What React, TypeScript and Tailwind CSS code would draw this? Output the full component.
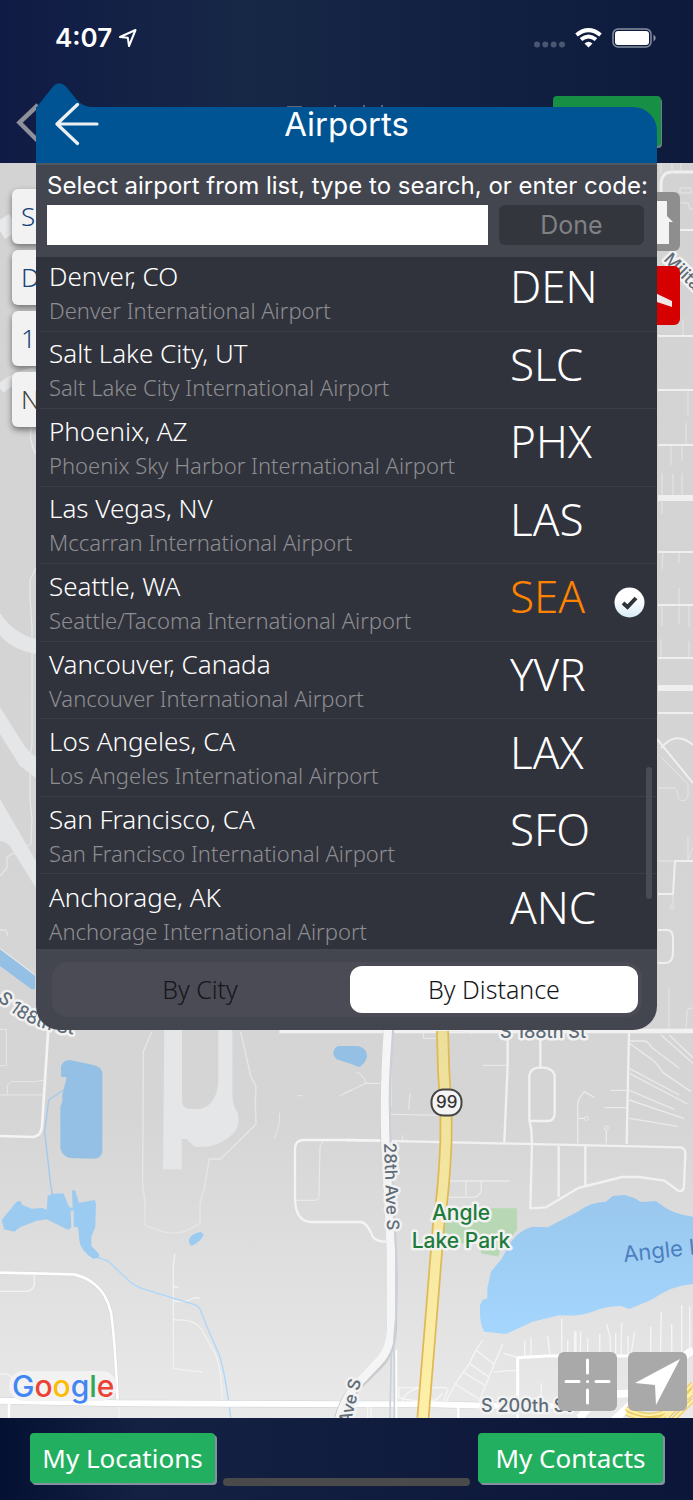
import { useState } from 'react';

type Airport = { city: string; name: string; code: string };

const AIRPORTS: Airport[] = [
  { city: 'Denver, CO', name: 'Denver International Airport', code: 'DEN' },
  { city: 'Salt Lake City, UT', name: 'Salt Lake City International Airport', code: 'SLC' },
  { city: 'Phoenix, AZ', name: 'Phoenix Sky Harbor International Airport', code: 'PHX' },
  { city: 'Las Vegas, NV', name: 'Mccarran International Airport', code: 'LAS' },
  { city: 'Seattle, WA', name: 'Seattle/Tacoma International Airport', code: 'SEA' },
  { city: 'Vancouver, Canada', name: 'Vancouver International Airport', code: 'YVR' },
  { city: 'Los Angeles, CA', name: 'Los Angeles International Airport', code: 'LAX' },
  { city: 'San Francisco, CA', name: 'San Francisco International Airport', code: 'SFO' },
  { city: 'Anchorage, AK', name: 'Anchorage International Airport', code: 'ANC' },
];

function StreetMap() {
  return (
    <svg
      className="absolute inset-0 h-full w-full"
      viewBox="0 163 693 1255"
      preserveAspectRatio="xMidYMid slice"
      aria-label="Map"
      fill="none"
      strokeLinejoin="round"
    >
      <defs>
        <linearGradient id="land" x1="0" y1="163" x2="0" y2="1418" gradientUnits="userSpaceOnUse">
          <stop offset="0" stopColor="#d3d3d3" />
          <stop offset="0.76" stopColor="#d5d5d5" />
          <stop offset="1" stopColor="#e9e9e9" />
        </linearGradient>
        <linearGradient id="lake" x1="0" y1="0" x2="0" y2="1">
          <stop offset="0" stopColor="#99c7ed" />
          <stop offset="1" stopColor="#a5d6fd" />
        </linearGradient>
        <linearGradient id="highway" x1="0" y1="1030" x2="0" y2="1418" gradientUnits="userSpaceOnUse">
          <stop offset="0" stopColor="#ecdf9b" />
          <stop offset="1" stopColor="#fff0a8" />
        </linearGradient>
        <path id="curved-street" d="M-3 999Q28 1032 80 1035" />
      </defs>
      <rect y="163" width="693" height="1255" fill="url(#land)" />

      {/* West side, above the lake */}
      <path d="M0 231L14 222" stroke="#e8e9ea" strokeWidth="19" />
      <path d="M0 389Q14 376 36 372" stroke="#e6e7e8" strokeWidth="10" />
      <path d="M31 425Q29 445 36 454M31 440L35 453M36 568L30 580V597L32 628V745L30 755V800L32 819L31 844L7 857V868L0 876M0 930H6L8 936" stroke="#e5e6e7" strokeWidth="1.3" />
      <path d="M0 613Q14 634 36 639V654Q10 649 0 635ZM0 707L22 742Q28 752 36 757V778L20 766L0 734ZM0 799L36 861V888L13 851Q8 841 0 841Z" fill="#e5e6e8" />

      {/* East side, beside the runway */}
      <g stroke="#efefef">
        <path d="M661 193V185Q661 172 672 172H693" strokeWidth="3" />
        <path d="M658 230H693M658 336H693M658 390H693M658 445H693M658 552H693M658 605H693M658 713H693" strokeWidth="2" />
        <path d="M658 498H693M658 688H693" strokeWidth="6" />
        <path d="M658 658H693" strokeWidth="2" />
        <path d="M657 739L693 783M661 748Q676 730 693 745M693 861H675L673 894H658M658 930H668Q673 931 673 938V952Q673 963 665 963H658" strokeWidth="2" />
      </g>
      <g stroke="#e6e6e6" strokeWidth="1">
        <path d="M661 163V174M672 163V173M681 163V171M680 188H691V193H680ZM681 203H688L690 209H693M683 319V335M688 391V416M686 423V444M671 446V465M682 446V461M662 473V495M673 474V495M682 473V495M662 500V514M663 553L662 569M679 553V563M679 588V604M689 606V627M662 606V626M679 606V624M661 639V657M689 641V657M658 788H674Q678 789 678 798Q683 804 688 797V784L661 757M658 861H675M688 837V860L693 847M673 894V904" />
        <circle cx="672" cy="907" r="2" />
        <path d="M669 987V1031M686 1030L687 1010Q688 1008 693 1008" />
      </g>

      {/* Airfield and the streets west of 28th Ave S */}
      <g transform="translate(0 940) scale(.33333)">
        <path d="M0 28L105 107V148H95L0 78Z" fill="#93c0e4" />
        <path d="M0 25L105 105" stroke="#ececec" strokeWidth="3" />
        <path d="M493 260H546V485Q548 507 575 507H600Q650 495 655 425V260H697V470Q700 500 714 520Q720 555 704 577Q660 620 614 620H584L560 597H545V688H489Z" fill="#e5e6e7" />
        <path d="M455 275L430 335L428 730L435 790V850Q435 860 460 865Q520 890 560 872L600 850V790L613 745L628 657H662L768 553L766 490L768 440L752 408L722 275" stroke="#e5e6e7" strokeWidth="4" />
        <path d="M839 518Q840 560 823 595M893 466L910 468M1018 468L1060 448" stroke="#e7e7e7" strokeWidth="3" />
        <path d="M0 268H19V377H0M22 465V436L34 425H108L132 420M0 465H130" stroke="#e7e7e7" strokeWidth="3" />
        <path d="M145 265L126 560Q123 588 100 591L0 588" stroke="#f4f4f4" strokeWidth="8" />
        <path d="M190 450L146 480L134 575L152 735L158 765" stroke="#9fcaef" strokeWidth="4" />
        <path d="M183 410V378Q190 360 210 360L280 375Q305 380 307 400V635Q302 655 282 656L210 654Q186 648 181 625V500L187 485V465L200 412Z" fill="#93c0e4" />
        <path d="M1015 318H1075Q1101 325 1101 350Q1095 374 1075 381L1055 372L1041 368L1010 358Q1000 350 1000 340Q1000 325 1015 318Z" fill="#93c0e4" />
      </g>
      <g transform="translate(0 1200) scale(.33333)">
        <path d="M5 60L50 5L62 3L66 14L95 26L128 24L140 30L143 -12L155 -18L190 -20L208 22L218 24L216 -28L225 -30L237 8L285 0L288 15L286 80L274 110V138L297 162V173L280 176Q240 152 238 120L234 82L221 80V30L212 34L214 82L205 90L140 58L110 62L60 82L43 95L12 88Z" fill="#9ccbf1" />
        <path d="M567 120Q572 100 603 96L611 105Q602 126 575 137Q567 135 567 120Z" fill="#9ccbf1" />
        <path d="M524 162L520 200V505L566 512L608 516M520 261H535M520 303L555 305L580 294H599M522 359L560 361Q590 366 606 390L645 460Q665 505 666 598" stroke="#f1f1f1" strokeWidth="4" />
        <path d="M295 173L324 183L390 245Q405 257 425 265L590 316L600 327L625 390L658 465Q676 520 692 653" stroke="#acd7fb" strokeWidth="4" />
        <path d="M0 274H80Q98 272 103 255V222M0 522H20L38 532M357 610V654" stroke="#f2f2f2" strokeWidth="4" />
        <path d="M0 218L222 223Q260 232 283 252Q320 280 333 338Q345 420 353 605" stroke="#d3d6da" strokeWidth="11" />
        <path d="M0 218L222 223Q260 232 283 252Q320 280 333 338Q345 420 353 605" stroke="#fff" strokeWidth="8" />
        <path d="M0 602L360 610L700 611L1041 613H1300L1460 617L1770 617" stroke="#d3d6da" strokeWidth="22" />
        <path d="M0 602L360 610L700 611L1041 613H1300L1460 617L1770 617" stroke="#fff" strokeWidth="18" />
        <path d="M27 610V654" stroke="#fff" strokeWidth="7" />
      </g>

      {/* Highway 99 corridor and eastward */}
      <g transform="translate(346 940) scale(.33333)">
        <path d="M-200 273H1041" stroke="#f1f1f1" strokeWidth="14" />
        <path d="M135 275V500M134 523L282 526M232 278V295H272M305 275H350L380 280M410 376H482M192 460L188 510M170 586V600M32 397Q50 400 60 430H106M-5 460L60 430" stroke="#ebebeb" strokeWidth="3" />
        <path d="M0 600L500 611L1003 622Q1018 625 1018 640L1014 742Q1010 756 998 753L955 722L880 711H828L697 744L600 802L553 805L558 612L556 570L550 540V405Q555 383 583 382Q620 382 626 405V520Q625 543 605 543H553M583 380V275M485 275V375L475 606M849 275L842 612M638 615V770M718 617V738" stroke="#f1f1f1" strokeWidth="7" />
        <path d="M120 602L0 600H-125Q-153 600 -153 625V780Q-150 846 -103 846H45Q65 850 80 890Q90 905 120 905" stroke="#f4f4f4" strokeWidth="7" />
        <path d="M-68 603L-78 618L-81 770Q-82 781 -93 781H-150" stroke="#ececec" strokeWidth="3" />
        <path d="M695 610V490Q695 480 715 455L746 473M695 535H715M781 610V570M775 503H840M794 451H850L985 508M850 480L1015 536M850 535L995 559M850 385L1000 465M850 400L1025 492M850 310L910 353Q930 365 950 397L1035 455M850 303H895Q905 304 920 325L1000 385M945 285L1041 370M970 285L1041 353M306 723H490M360 723V771M406 725V750Q402 768 385 772H303" stroke="#eaeaea" strokeWidth="4" />
        <circle cx="721" cy="535" r="6" stroke="#eaeaea" strokeWidth="3" />
        <circle cx="781" cy="564" r="6" stroke="#eaeaea" strokeWidth="3" />
        <path d="M129 265Q115 450 119 600L138 940V1140Q140 1230 100 1270L60 1310Q0 1360 -20 1435" stroke="#c8cbd0" strokeWidth="31" />
        <path d="M126 265Q113 450 118 600L135 940V1140Q138 1225 98 1265L55 1310Q0 1360 -20 1435" stroke="#f5f5f5" strokeWidth="25" />
        <path d="M143 275Q123 450 135 600L148 900M145 860Q158 1000 150 1130Q140 1220 145 1260V1435M136 1230L132 1435" stroke="#cbd1d8" strokeWidth="5" />
        <path d="M151 1230V1435" stroke="#fff" strokeWidth="5" />
      </g>
      <g transform="translate(346 1200) scale(.33333)">
        <path d="M290 25H513V90L497 110L470 125L457 170L405 160V130H290Z" fill="#b8d8b5" />
        <path d="M435 215L468 175L495 125Q520 90 560 80L605 82L695 35Q735 5 780 5L800 -12L835 -15L865 -6L885 6L930 3L960 25Q990 43 1041 50V252Q980 255 915 300L850 327L825 318Q770 320 740 335Q700 350 640 346L560 365L480 402L415 395Q400 375 402 315L410 299L424 295V265Z" fill="url(#lake)" />
        <path d="M1041 450L990 485L805 660M700 655L760 585L850 580" stroke="#fff" strokeWidth="23" />
        <path d="M515 615V473L600 468H1000" stroke="#fff" strokeWidth="9" />
        <path d="M647 355V468M536 422V468M555 412V468M605 408L612 465M665 420V463M686 393V463M690 395V463M704 393L703 463M725 415V463M761 402V463M782 373L792 410L794 463M809 400V463M827 368L825 463M846 408V463M866 398L855 463M914 380V463M946 335L943 463M977 372V463M1007 315V463M1031 318V463M410 420L390 450L370 490L328 552L300 605M470 433L398 605M390 450L443 492M370 490L427 530M350 515L415 555M328 552L395 595M475 460L512 472M443 517L485 512H512M586 550V600M158 563H300L306 570L292 603M158 563V592Q190 605 270 600L290 580M170 605Q175 575 215 565M65 620V655M75 620V655" stroke="#f5f5f5" strokeWidth="4" />
        <path d="M337 620V655M515 620V655" stroke="#fff" strokeWidth="7" />
        <path d="M840 625Q900 660 960 635L1041 550M840 640Q900 665 945 655L1041 580M960 655L1041 570M980 660L1041 600" stroke="#eccb60" strokeWidth="14" />
        <path d="M840 625Q900 660 960 635L1041 550M840 640Q900 665 945 655L1041 580M960 655L1041 570M980 660L1041 600" stroke="#fff0a8" strokeWidth="7" />
      </g>
      <path d="M442.500 1031Q443 1070 446 1110V1140Q444 1190 439 1220L423 1418" stroke="#dfb956" strokeWidth="13" />
      <path d="M442.500 1031Q443 1070 446 1110V1140Q444 1190 439 1220L423 1418" stroke="url(#highway)" strokeWidth="9.500" />
      <rect x="431.500" y="1089.500" width="30" height="26" rx="12" fill="#f4f4f4" stroke="#444" strokeWidth="2" />

      <g className="font-['Inter',sans-serif]" stroke="#f2f2f2" strokeWidth="5" paintOrder="stroke" fill="#5f6c77" fontWeight="500">
        <text x="436" y="1108" fontSize="17" fill="#333" stroke="none">99</text>
        <text x="500" y="1038" fontSize="18">S 188th St</text>
        <text x="481" y="1412" fontSize="18">S 200th St</text>
        <text fontSize="18">
          <textPath href="#curved-street">S 188th St</textPath>
        </text>
        <text transform="translate(384 1143) rotate(88)" fontSize="17">28th Ave S</text>
        <text transform="translate(350 1425) rotate(-76)" fontSize="17">Ave S</text>
        <text transform="translate(663 260) rotate(45)" fontSize="17">Military</text>
        <text x="461" y="1220" fontSize="21" fill="#207b3b" textAnchor="middle">Angle</text>
        <text x="461" y="1248" fontSize="21" fill="#207b3b" textAnchor="middle">Lake Park</text>
        <text transform="translate(624 1262) rotate(-6)" fontSize="22" fill="#4c7fbf" stroke="none" fontWeight="400">Angle Lake</text>
      </g>
      <path d="M24 1386H102" stroke="#f2f2f2" strokeWidth="30" strokeLinecap="round" />
      <text x="12" y="1397" fontSize="30" fontWeight="500" className="font-['Inter',sans-serif]">
        <tspan fill="#4285f4">G</tspan>
        <tspan fill="#ea4335">o</tspan>
        <tspan fill="#fbbc05">o</tspan>
        <tspan fill="#4285f4">g</tspan>
        <tspan fill="#34a853">l</tspan>
        <tspan fill="#ea4335">e</tspan>
      </text>
    </svg>
  );
}

function StatusBar() {
  return (
    <div className="flex h-[76px] items-center justify-between pr-9 pl-[55px] text-white">
      <div className="flex items-center gap-[7px]">
        <span className="text-[26px] leading-8 font-semibold">4:07</span>
        <svg width="18" height="20" viewBox="0 0 18 20" fill="none" stroke="white" strokeWidth="2" strokeLinejoin="round" aria-hidden="true">
          <path d="M1 9L16.500 2L10 18L8.800 9.800Z" />
        </svg>
      </div>
      <div className="flex items-center gap-[10px]">
        <svg width="31" height="20" viewBox="0 0 31 20" fill="#4b5672" aria-hidden="true">
          <circle cx="3" cy="16.500" r="3" />
          <circle cx="11.300" cy="16.500" r="3" />
          <circle cx="19.700" cy="16.500" r="3" />
          <circle cx="28" cy="16.500" r="3" />
        </svg>
        <svg width="27" height="20" viewBox="0 0 27 20" fill="none" stroke="white" strokeWidth="4" aria-hidden="true">
          <path d="M1.500 7Q13.500 -2.800 25.500 7" />
          <path d="M6 11.500Q13.500 5.500 21 11.500" />
          <path d="M13.500 19.600L9.500 15.500Q13.500 12 17.500 15.500Z" fill="white" stroke="none" />
        </svg>
        <svg width="45" height="20" viewBox="0 0 45 20" aria-hidden="true">
          <rect x="1" y="1" width="38" height="18" rx="5" fill="none" stroke="#8991a3" strokeWidth="1.500" />
          <rect x="3" y="3" width="34" height="14" rx="3" fill="white" />
          <path d="M41.500 6.500Q46 10 41.500 13.500Z" fill="#8991a3" />
        </svg>
      </div>
    </div>
  );
}

function CheckMark() {
  return (
    <svg width="31" height="31" viewBox="0 0 31 31" aria-label="Selected">
      <defs>
        <linearGradient id="disc" x1="0" y1="0" x2="0" y2="1">
          <stop offset="0.400" stopColor="#fff" />
          <stop offset="1" stopColor="#d7ecf5" />
        </linearGradient>
      </defs>
      <circle cx="15.500" cy="15.500" r="15" fill="url(#disc)" />
      <path d="M9 16L13.500 20L22 11" fill="none" stroke="#31333c" strokeWidth="4" />
    </svg>
  );
}

function AirportPicker() {
  const [selected, setSelected] = useState('SEA');
  const [order, setOrder] = useState('By Distance');

  return (
    <section aria-label="Airports" className="absolute inset-x-9 top-[107px] text-white">
      <svg className="absolute -top-6 left-0" width="60" height="25" viewBox="0 0 60 25" aria-hidden="true">
        <path d="M0 25L17 3.500Q23 -3 30 3.500L41 17Q47 24 56 24V25Z" fill="#005493" />
      </svg>
      <header className="relative grid h-14 grid-cols-[1fr_auto_1fr] items-start rounded-tr-3xl bg-[#005493]">
        <button type="button" aria-label="Back" className="-mt-1 ml-[18px] w-12">
          <svg width="48" height="44" viewBox="0 0 48 44" fill="none" stroke="#ecf0f3" strokeWidth="3.200" strokeLinecap="round" strokeLinejoin="round">
            <path d="M23.500 1.500L3 21L23.500 40.500M3 21H43" />
          </svg>
        </button>
        <h1 className="text-[33px] leading-[34px]">Airports</h1>
      </header>
      <div className="overflow-hidden rounded-b-[24px] border-t-2 border-[#4d5862] bg-[#43464f]">
        <form className="pt-[3px] pr-[13px] pb-3 pl-[11px]" onSubmit={(e) => e.preventDefault()}>
          <label htmlFor="airport-search" className="block h-[37px] text-[24px] leading-9 whitespace-nowrap">
            Select airport from list, type to search, or enter code:
          </label>
          <div className="flex gap-[11px]">
            <input id="airport-search" type="text" className="h-10 min-w-0 flex-1 bg-white px-2 text-2xl text-black outline-none" />
            <button type="submit" className="h-10 w-[145px] rounded-md bg-[#34363e] text-[25px] leading-10 text-[#808184]">
              Done
            </button>
          </div>
        </form>
        <div className="relative h-[692px] overflow-hidden bg-[#31333c] font-['Noto_Sans',sans-serif]">
          <ul className="-mt-[3px] grid h-[698px] auto-rows-fr">
            {AIRPORTS.map((airport) => (
              <li key={airport.code} className="ml-1 border-b border-[#3c3f49] last:border-0">
                <button
                  type="button"
                  onClick={() => setSelected(airport.code)}
                  className="flex h-full w-full items-center pl-[9px] text-left font-light"
                >
                  <span className="min-w-0 flex-1 pt-px">
                    <span className="block text-[26px] leading-[34px]">{airport.city}</span>
                    <span className="block text-[22px] leading-[34px] text-[#8d8e92]">{airport.name}</span>
                  </span>
                  <span className={`w-[104px] pb-3 text-[44px] leading-[60px] ${airport.code === selected ? 'text-[#ff8200]' : ''}`}>
                    {airport.code}
                  </span>
                  <span className="w-[43px]">{airport.code === selected && <CheckMark />}</span>
                </button>
              </li>
            ))}
          </ul>
          <div className="absolute right-[5px] bottom-[50px] h-[132px] w-[6px] rounded-full bg-[#4a4b55]" />
        </div>
        <div className="pt-[13px] pr-[15px] pb-[13px] pl-4">
          <div className="grid h-[55px] grid-cols-2 gap-[6px] rounded-2xl bg-[#4b4b55] p-1 font-['Noto_Sans',sans-serif] text-[25px] font-light text-[#15161a]">
            {['By City', 'By Distance'].map((label) => (
              <button
                key={label}
                type="button"
                aria-pressed={order === label}
                onClick={() => setOrder(label)}
                className={`rounded-xl ${order === label ? 'bg-white' : ''}`}
              >
                {label}
              </button>
            ))}
          </div>
        </div>
      </div>
    </section>
  );
}

export default function App() {
  return (
    <div className="relative flex min-h-screen flex-col overflow-hidden bg-[#142143] font-['Inter',sans-serif]">
      <header className="h-[163px] bg-linear-to-r from-[#101b45] via-[#172746] via-35% to-[#0d1a3c]">
        <StatusBar />
        <div className="flex items-start justify-between pt-5 pr-8 pl-4">
          <button type="button" aria-label="Previous page" className="pt-1">
            <svg width="24" height="46" viewBox="0 0 24 46" fill="none" stroke="#8e909a" strokeWidth="4.500">
              <path d="M22 5L3.500 22.500L22 41" />
            </svg>
          </button>
          <svg className="mt-[9px] ml-20" width="100" height="4" viewBox="0 0 100 4" fill="#5d6677" aria-hidden="true">
            <path d="M0 1H15V2H0ZM47 0H49V2H47ZM76 0H78V2H76ZM94 0H96V2H94Z" />
          </svg>
          <button type="button" aria-label="Confirm" className="h-[50px] w-[108px] rounded-sm bg-[#178f45] shadow-[1px_2px_0_#747c8b]" />
        </div>
      </header>

      <main className="relative flex min-h-[1255px] flex-1 flex-col justify-between">
        <StreetMap />
        <div className="relative flex items-start justify-between pt-[26px] pr-[13px] pl-3">
          <ul className="flex w-1/2 flex-col gap-[6px] font-['Noto_Sans',sans-serif] text-[26px] font-light text-[#16427a]">
            {['S', 'D', '1', 'N'].map((initial) => (
              <li key={initial} className="flex h-[55px] items-center rounded-md bg-[#f2f2f2] pl-[9px] shadow-[0_3px_6px_#0007] last:text-[#444]">
                {initial}
              </li>
            ))}
          </ul>
          <div className="flex flex-col gap-[15px] pt-[3px]">
            <button type="button" aria-label="Home" className="h-[59px] w-[59px] rounded-md bg-[#8e8e8e]">
              <svg width="59" height="59" viewBox="0 0 59 59" fill="#f3f3f3">
                <path d="M29 9H46V24L52 30H48V52H12V30H6L29 9Z" />
              </svg>
            </button>
            <button type="button" aria-label="Airport" className="h-[59px] w-[59px] rounded-md bg-[#d60000]">
              <svg width="59" height="59" viewBox="0 0 59 59" fill="#f0e8e8">
                <path d="M30 25L51 35V41L30 34Z" />
              </svg>
            </button>
          </div>
        </div>
        <div className="relative flex justify-end gap-[11px] pr-[6px] pb-[7px]">
          <button type="button" aria-label="Center map" className="h-[59px] w-[59px] rounded-md bg-[#a9a9a9]">
            <svg width="59" height="59" viewBox="0 0 59 59" fill="none" stroke="#fff" strokeWidth="3" strokeLinecap="round">
              <path d="M29.500 8V21M29.500 38V51M8 29.500H21M38 29.500H51M29.500 29.500H29.600" />
            </svg>
          </button>
          <button type="button" aria-label="My position" className="h-[59px] w-[59px] rounded-md bg-[#a9a9a9]">
            <svg width="59" height="59" viewBox="0 0 59 59" fill="#fff">
              <path d="M52 7L28 53L27 33L7 31Z" />
            </svg>
          </button>
        </div>
      </main>

      <footer className="flex h-[82px] items-start justify-between bg-linear-to-r from-[#051132] via-[#152142] via-20% to-[#0b1638] px-[30px] pt-[15px] font-['Noto_Sans',sans-serif] text-[26px] text-white">
        <button type="button" className="h-[50px] w-[185px] rounded-sm bg-[#22b060] shadow-[2px_2px_0_#8790a0]">My Locations</button>
        <div className="mx-2 mt-[45px] h-2 min-w-0 flex-1 rounded-full bg-[#4a4a4a]" />
        <button type="button" className="h-[50px] w-[185px] rounded-sm bg-[#22b060] shadow-[2px_2px_0_#8790a0]">My Contacts</button>
      </footer>

      <AirportPicker />
    </div>
  );
}
